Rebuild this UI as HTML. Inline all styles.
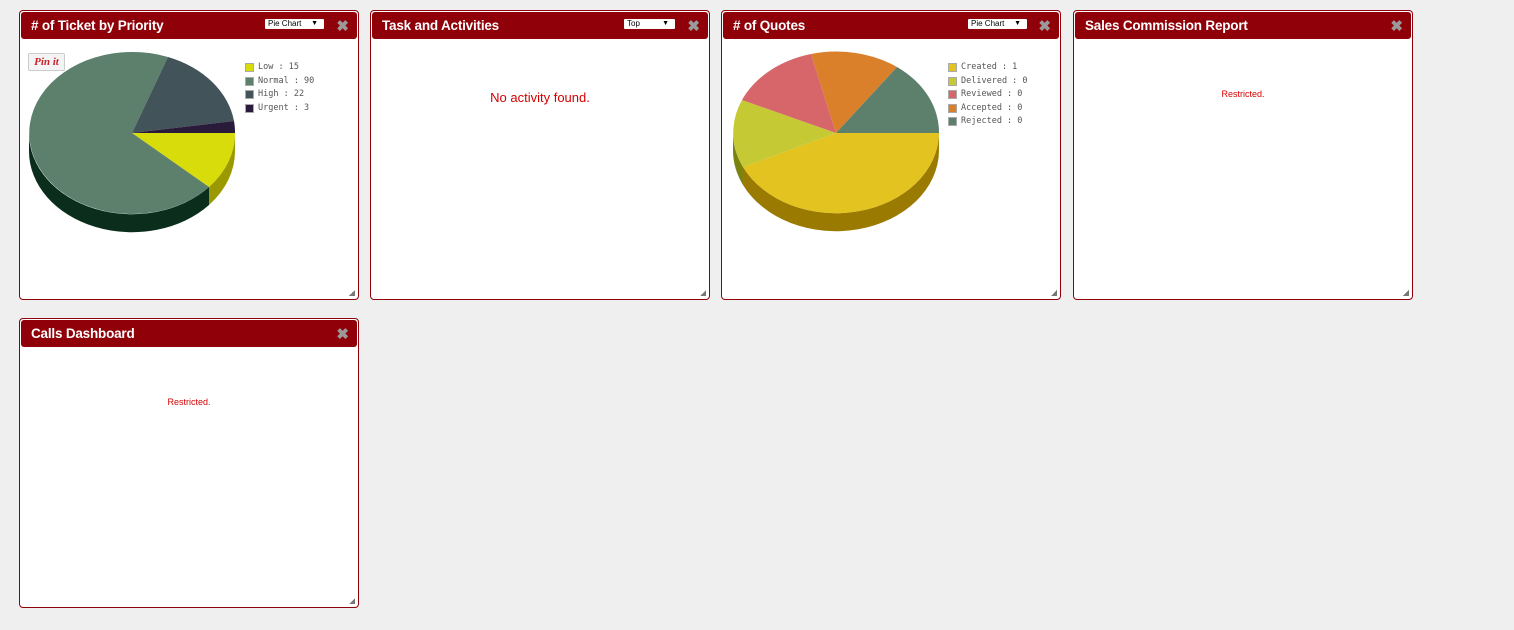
<!DOCTYPE html>
<html><head><meta charset="utf-8">
<style>
body{margin:0;width:1514px;height:630px;background:#efefef;font-family:"Liberation Sans",sans-serif;position:relative;overflow:hidden}
.p{position:absolute;width:338px;height:288px;background:#fff;border:1px solid #8f0008;border-radius:4px}
.h{position:absolute;left:1px;top:1px;right:1px;height:27px;background:#8f0008;border-radius:3px}
.h .t{position:absolute;left:10px;top:6px;color:#fff;font-weight:bold;font-size:13.5px;letter-spacing:-0.2px}
.x{position:absolute;right:8px;top:5px;color:#9a9a9a;font-size:15px;font-weight:bold}
.sel{position:absolute;top:7px;height:10px;background:#fff;font-size:8px;line-height:10px;color:#000;padding-left:3px;border-radius:1px}
.sel span{position:absolute;right:6px;top:0;font-size:7px}
.g{position:absolute;right:3px;bottom:3px;width:6px;height:6px;background:linear-gradient(135deg,transparent 50%,#777 50%)}
.msg{position:absolute;left:0;right:0;text-align:center;color:#d40000}
.leg{position:absolute;font-family:"DejaVu Sans Mono","Liberation Mono",monospace;font-size:8.5px;color:#555}
.leg div{height:13.5px;line-height:9px;white-space:nowrap}
.leg i{display:inline-block;width:7px;height:7px;margin-right:4px;vertical-align:top;border:1px solid #aaa}
</style></head><body>

<div class="p" style="left:19px;top:10px">
 <div class="h"><div class="t"># of Ticket by Priority</div><div class="sel" style="left:244px;width:56px">Pie Chart<span>▼</span></div><div class="x">✖</div></div>
 <div style="position:absolute;left:8px;top:42px;width:35px;height:16px;border:1px solid #ccc;background:#f4f4f4;color:#c8232c;font:italic bold 11px 'Liberation Serif',serif;text-align:center;line-height:16px;border-radius:2px">Pin it</div>
 <div class="leg" style="left:225px;top:52px"><div><i style="background:#d8dc0a"></i>Low : 15</div><div><i style="background:#5d806c"></i>Normal : 90</div><div><i style="background:#42535a"></i>High : 22</div><div><i style="background:#2b1b3b"></i>Urgent : 3</div></div>
 <div class="g"></div>
</div>

<div class="p" style="left:370px;top:10px">
 <div class="h"><div class="t">Task and Activities</div><div class="sel" style="left:252px;width:48px">Top<span>▼</span></div><div class="x">✖</div></div>
 <div class="msg" style="top:79px;font-size:13px">No activity found.</div>
 <div class="g"></div>
</div>

<div class="p" style="left:721px;top:10px">
 <div class="h"><div class="t"># of Quotes</div><div class="sel" style="left:245px;width:56px">Pie Chart<span>▼</span></div><div class="x">✖</div></div>
 <div class="leg" style="left:226px;top:52px"><div><i style="background:#e3c320"></i>Created : 1</div><div><i style="background:#c4c934"></i>Delivered : 0</div><div><i style="background:#d6666a"></i>Reviewed : 0</div><div><i style="background:#da802b"></i>Accepted : 0</div><div><i style="background:#5d806c"></i>Rejected : 0</div></div>
 <div class="g"></div>
</div>

<div class="p" style="left:1073px;top:10px">
 <div class="h"><div class="t">Sales Commission Report</div><div class="x">✖</div></div>
 <div class="msg" style="top:78px;font-size:9px">Restricted.</div>
 <div class="g"></div>
</div>

<div class="p" style="left:19px;top:318px">
 <div class="h"><div class="t">Calls Dashboard</div><div class="x">✖</div></div>
 <div class="msg" style="top:78px;font-size:9px">Restricted.</div>
 <div class="g"></div>
</div>

<svg width="1514" height="630" style="position:absolute;left:0;top:0" >
 <path d="M235,133 A103,81 0 0 1 209,187 L209,205 A103,81 0 0 0 235,151 Z" fill="#9a9a00"/>
 <path d="M209,187 A103,81 0 0 1 29,133 L29,151 A103,81 0 0 0 209,205 Z" fill="#0b2e1c"/>
 <path d="M132,133 L235,133 A103,81 0 0 1 209,187 Z" fill="#d8dc0a"/>
 <path d="M132,133 L209,187 A103,81 0 1 1 168,57 Z" fill="#5d806c"/>
 <path d="M132,133 L168,57 A103,81 0 0 1 234,121 Z" fill="#42535a"/>
 <path d="M132,133 L234,121 A103,81 0 0 1 235,133 Z" fill="#2b1b3b"/>

 <path d="M939,133 A103,81 0 0 1 743,167 L743,185 A103,81 0 0 0 939,151 Z" fill="#9a7a00"/>
 <path d="M743,167 A103,81 0 0 1 733,133 L733,151 A103,81 0 0 0 743,185 Z" fill="#7b8210"/>
 <path d="M836,133 L939,133 A103,81 0 0 1 743,167 Z" fill="#e3c320"/>
 <path d="M836,133 L743,167 A103,81 0 0 1 742,100 Z" fill="#c4c934"/>
 <path d="M836,133 L742,100 A103,81 0 0 1 811,54 Z" fill="#d6666a"/>
 <path d="M836,133 L811,54 A103,81 0 0 1 897,67 Z" fill="#da802b"/>
 <path d="M836,133 L897,67 A103,81 0 0 1 939,133 Z" fill="#5d806c"/>
</svg>
</body></html>
